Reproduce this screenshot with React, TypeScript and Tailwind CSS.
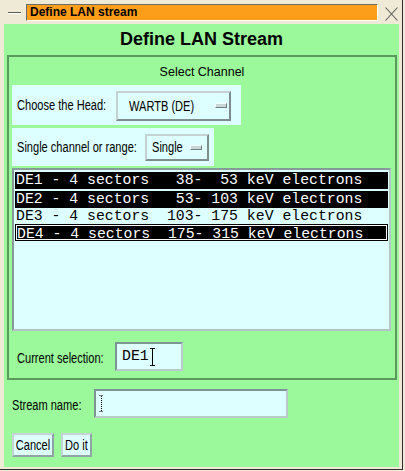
import React from "react";

// Motif-style dialog: "Define LAN stream"

const ROWS = [
  { text: "DE1 - 4 sectors   38-  53 keV electrons", selected: true },
  { text: "DE2 - 4 sectors   53- 103 keV electrons", selected: true },
  { text: "DE3 - 4 sectors  103- 175 keV electrons", selected: false },
  { text: "DE4 - 4 sectors  175- 315 keV electrons", selected: true, focus: true },
];

const mono = "font-['Liberation_Mono','Courier_New',monospace]";

// X11 helvetica is narrow; squeeze Liberation Sans to match
function Lbl({ children, w, center }: { children: React.ReactNode; w: string; center?: boolean }) {
  return (
    <span
      className={`inline-block shrink-0 ${w} whitespace-nowrap font-['Liberation_Sans',sans-serif] text-[14px] leading-none text-black scale-x-[0.79] ${center ? "origin-center text-center" : "origin-left"}`}
    >
      {children}
    </span>
  );
}

function Indicator() {
  return (
    <span className="block shrink-0 w-[12px] h-[5px] bg-[#c9d6d6] border border-t-[#f4ffff] border-l-[#f4ffff] border-b-[#6d7f7f] border-r-[#6d7f7f]"></span>
  );
}

const raised = "bg-[#ddffff] border-2 border-t-[#c4d2d2] border-l-[#c4d2d2] border-b-[#7c8e8e] border-r-[#7c8e8e]";
const sunken = "bg-[#ddffff] border-2 border-t-[#7d9494] border-l-[#7d9494] border-b-[#b7cbcb] border-r-[#b7cbcb]";

export default function App() {
  return (
    <div className="w-[405px] h-[471px] bg-[#eeead6] overflow-hidden">
      <div className="w-[403px] h-[470px] border-r border-b border-[#2e2e2e] flex flex-col">
        {/* Title bar */}
        <div className="h-[24px] flex items-start">
          <div className="w-[26px] pt-[12px] pl-[8px]">
            <div className="w-[13px] h-[1px] bg-[#5a5a52]"></div>
            <div className="w-[13px] h-[1px] bg-[#ffffff]"></div>
          </div>
          <div className="mt-[4px] w-[352px] h-[17px] bg-[#fd9e1a] border border-t-[#6b6b6b] border-l-[#6b6b6b] border-b-[#fffef4] border-r-[#fffef4] pl-[3px] font-['Liberation_Sans',sans-serif] font-bold text-[12px] leading-[15px] text-black">
            Define LAN stream
          </div>
          <div className="ml-[7px] mt-[7px]">
            <svg width="13" height="14" viewBox="0 0 13 14">
              <path d="M0.5 0.5 L12.5 13.5 M12.5 0.5 L0.5 13.5" stroke="#5c5c5c" strokeWidth="1.1" fill="none" />
            </svg>
          </div>
        </div>

        {/* Body */}
        <div className="ml-[4px] w-[395px] h-[443px] bg-[#9bf99b] flex flex-col">
          <div className="h-[31px] pt-[4px] text-center font-['Liberation_Sans',sans-serif] font-bold text-[18px] leading-[22px] text-black">
            Define LAN Stream
          </div>

          {/* Select Channel group */}
          <div className="ml-[3px] w-[390px] h-[325px] border-2 border-[#5d995d] flex flex-col pl-[3px]">
            <div className="pt-[8px] h-[22px] text-center pr-[3px] font-['Liberation_Sans',sans-serif] text-[12.5px] leading-[14px] text-black">
              Select Channel
            </div>

            <div className="mt-[6px] w-[229px] h-[40px] bg-[#ddffff] flex items-center pl-[5px] pr-[10px]">
              <Lbl w="w-[90px]">Choose the Head:</Lbl>
              <div className={`ml-auto mt-[1px] w-[115px] h-[30px] flex items-center justify-between pl-[11px] pr-[2px] ${raised}`}>
                <Lbl w="w-[66px]">WARTB (DE)</Lbl>
                <Indicator />
              </div>
            </div>

            <div className="mt-[3px] w-[202px] h-[38px] bg-[#ddffff] flex items-center pl-[5px] pr-[5px]">
              <Lbl w="w-[118px]">Single channel or range:</Lbl>
              <div className={`ml-auto w-[64px] h-[27px] flex items-center justify-between pl-[5px] pr-[5px] ${raised}`}>
                <Lbl w="w-[31px]">Single</Lbl>
                <Indicator />
              </div>
            </div>

            {/* Channel list */}
            <div className="mt-[2px] w-[379px] h-[163px] bg-[#ddffff] border-2 border-t-[#869a9a] border-l-[#869a9a] border-b-[#b3c6c6] border-r-[#b3c6c6] p-[1px] pt-[2px] flex flex-col">
              {ROWS.map((r, i) => (
                <div
                  key={i}
                  className={`${i === 1 ? "mt-[2px]" : ""} ${i === 2 ? "h-[16px]" : "h-[17px]"} ${r.selected ? "bg-black text-white" : "text-black"} ${r.focus ? "p-[1px]" : ""}`}
                >
                  <div className={`${r.focus ? "border border-white h-[15px]" : "h-full pl-[1px]"} ${mono} text-[14.8px] leading-[15px] pt-[1px] whitespace-pre`}>
                    {r.text}
                  </div>
                </div>
              ))}
            </div>

            <div className="mt-[11px] h-[29px] flex items-center pl-[5px]">
              <span className="w-[98px] shrink-0">
                <Lbl w="w-[89px]">Current selection:</Lbl>
              </span>
              <div className={`w-[68px] h-[29px] flex items-center pl-[5px] ${sunken}`}>
                <span className={`${mono} text-[14.8px] leading-none text-black`}>DE1</span>
                <svg width="5" height="18" viewBox="0 0 5 18" className="ml-[1px]">
                  <path d="M0 0.5 H5 M2.5 0.5 V17.5 M0 17.5 H5" stroke="#000" strokeWidth="1" fill="none" />
                </svg>
              </div>
            </div>
          </div>

          {/* Stream name */}
          <div className="mt-[9px] h-[29px] flex items-center pl-[8px]">
            <span className="w-[82px] shrink-0">
              <Lbl w="w-[72px]">Stream name:</Lbl>
            </span>
            <div className={`w-[194px] h-[29px] flex items-center pl-[3px] ${sunken}`}>
              <svg width="5" height="17" viewBox="0 0 5 17">
                <path d="M0.5 0.5 H4.5 M2.5 1 V16 M0.5 16.5 H4.5" stroke="#000" strokeWidth="1" strokeDasharray="1 1" fill="none" />
              </svg>
            </div>
          </div>

          {/* Actions */}
          <div className="mt-[15px] h-[24px] flex gap-[7px] pl-[8px]">
            <button className="w-[42px] h-[24px] flex items-center justify-center bg-[#ddffff] border-2 border-t-[#c4d4d4] border-l-[#c4d4d4] border-b-[#8fa4a4] border-r-[#8fa4a4]">
              <Lbl w="w-[44px]" center>Cancel</Lbl>
            </button>
            <button className="w-[31px] h-[24px] flex items-center justify-center bg-[#ddffff] border-2 border-t-[#c4d4d4] border-l-[#c4d4d4] border-b-[#8fa4a4] border-r-[#8fa4a4]">
              <Lbl w="w-[29px]" center>Do it</Lbl>
            </button>
          </div>
        </div>
      </div>
    </div>
  );
}
